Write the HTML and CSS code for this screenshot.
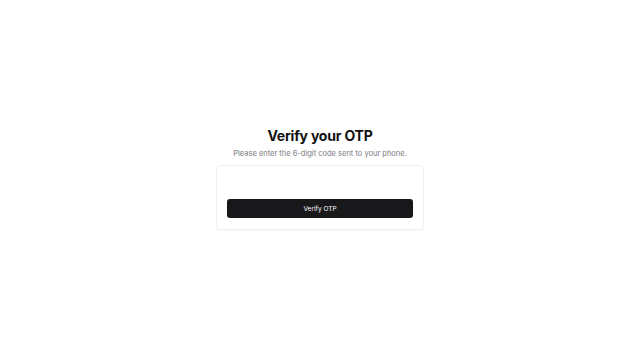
FILE: index.html
```html
<!DOCTYPE html>
<html lang="en">
<head>
<meta charset="utf-8">
<title>Verify your OTP</title>
<link rel="stylesheet" href="styles.css">
</head>
<body>
<main class="page">
  <div class="wrap">
    <h1 class="title">Verify your OTP</h1>
    <p class="subtitle">Please enter the 6-digit code sent to your phone.</p>
    <form class="card">
      <div class="otp" aria-label="OTP input"></div>
      <button type="button" class="btn">Verify OTP</button>
    </form>
  </div>
</main>
</body>
</html>
```

FILE: styles.css
```css
* { box-sizing: border-box; }
html, body { margin: 0; padding: 0; background: #ffffff; }
body { font-family: Inter, "Noto Sans", "Liberation Sans", sans-serif; color: #18181b; }
.page {
  min-height: 357px;
  display: flex;
  align-items: center;
  justify-content: center;
}
.wrap {
  display: flex;
  flex-direction: column;
  align-items: center;
}
.title {
  margin: 0;
  font-size: 14px;
  line-height: 18px;
  font-weight: 700;
  letter-spacing: -0.2px;
  color: #111113;
}
.subtitle {
  margin: 4px 0 0;
  font-size: 7.5px;
  line-height: 10px;
  color: #7a7a80;
}
.card {
  margin-top: 6px;
  width: 208px;
  padding: 11px 10px 11px 10px;
  border: 1px solid #f0f0f2;
  border-radius: 4px;
  box-shadow: 0 1px 2px rgba(0,0,0,0.03);
  display: flex;
  flex-direction: column;
}
.otp {
  height: 22px;
}
.btn {
  height: 19px;
  width: 100%;
  border: 0;
  border-radius: 3px;
  background: #18181b;
  color: #ffffff;
  font-family: inherit;
  font-size: 6.5px;
  font-weight: 400;
  padding: 0;
}
```
